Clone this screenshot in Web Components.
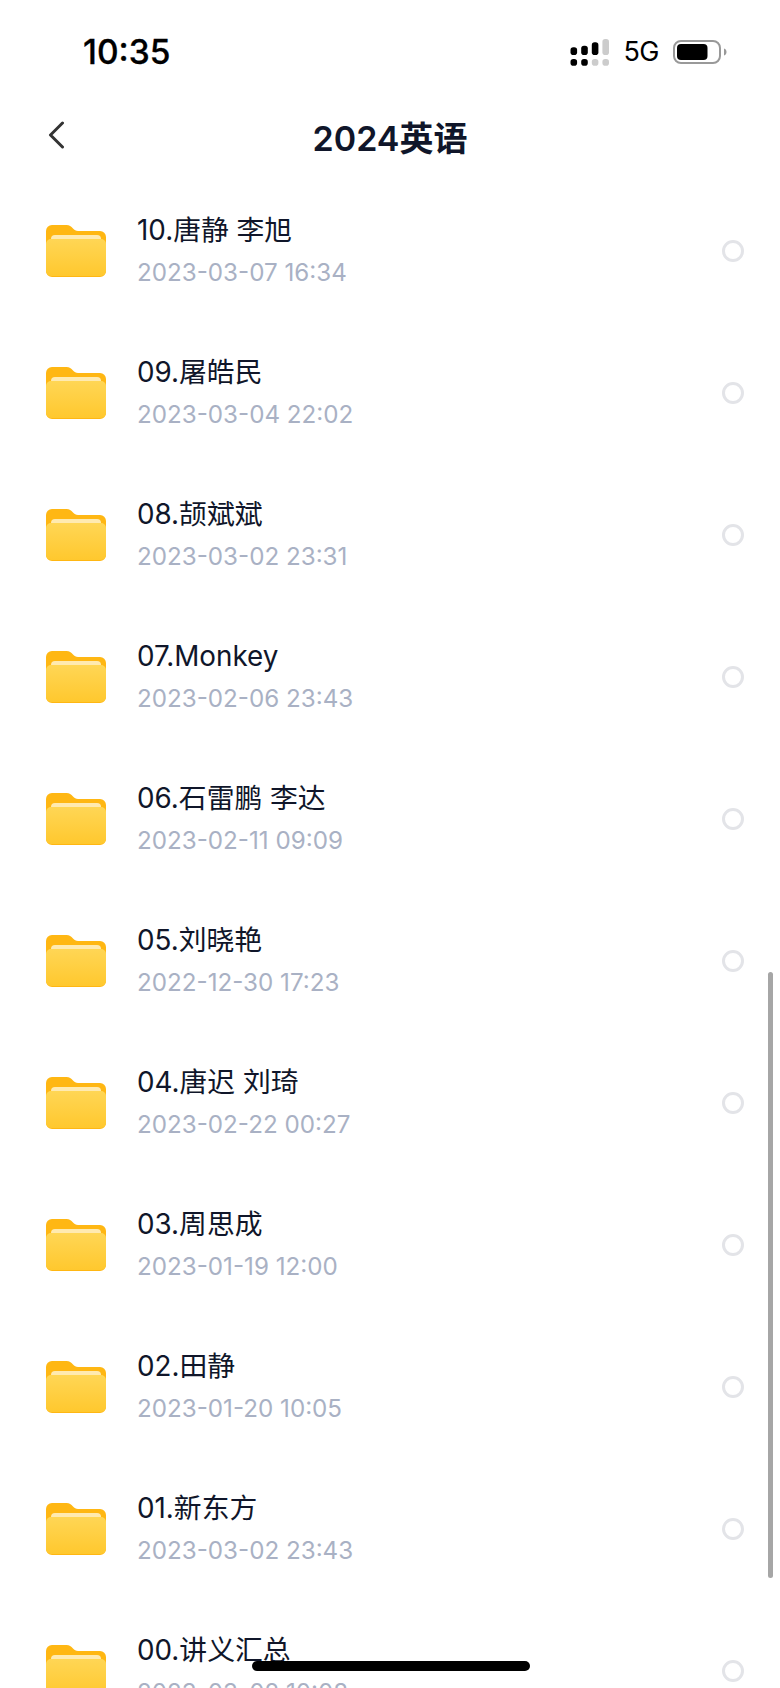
<!DOCTYPE html>
<html lang="zh-CN">
<head>
<meta charset="utf-8">
<title>2024英语</title>
<style>
html, body { margin: 0; padding: 0; background: #fff; }
body { font-family: Inter, "Noto Sans CJK SC", sans-serif; }
</style>
</head>
<body>
<app-screen>
  <status-bar slot="top"></status-bar>
  <nav-bar slot="top">2024英语</nav-bar>
  <file-row date="2023-03-07 16:34">10.唐静 李旭</file-row>
  <file-row date="2023-03-04 22:02">09.屠皓民</file-row>
  <file-row date="2023-03-02 23:31">08.颉斌斌</file-row>
  <file-row date="2023-02-06 23:43">07.Monkey</file-row>
  <file-row date="2023-02-11 09:09">06.石雷鹏 李达</file-row>
  <file-row date="2022-12-30 17:23">05.刘晓艳</file-row>
  <file-row date="2023-02-22 00:27">04.唐迟 刘琦</file-row>
  <file-row date="2023-01-19 12:00">03.周思成</file-row>
  <file-row date="2023-01-20 10:05">02.田静</file-row>
  <file-row date="2023-03-02 23:43">01.新东方</file-row>
  <file-row date="2023-03-02 10:08">00.讲义汇总</file-row>
</app-screen>
<script>
// 状态栏
class StatusBar extends HTMLElement {
  constructor() {
    super();
    this.attachShadow({ mode: 'open' }).innerHTML = `
      <style>
      :host { display: flex; align-items: center; justify-content: space-between; height: 78px; padding: 26px 53px 0 83px; box-sizing: border-box; color: #000; font-family: Inter, "Liberation Sans", sans-serif; }
      .time { font-size: 33.500px; font-weight: 500; -webkit-text-stroke: 0.3px #000; }
      .right { display: flex; align-items: center; }
      .net { font-size: 27px; font-weight: 400; letter-spacing: -0.5px; margin: 0 14px 0 14px; line-height: 28px; }
      svg { display: block; }
      </style>
      <span class="time">10:35</span>
      <div class="right">
        <svg width="39" height="27" viewBox="0 0 39 27">
          <rect x="0.500" y="8.300" width="6.600" height="7.700" rx="2.800" fill="#000"/>
          <rect x="0.500" y="20" width="6.600" height="6.700" rx="2.800" fill="#000"/>
          <rect x="11.200" y="6.700" width="6.600" height="9.300" rx="2.800" fill="#000"/>
          <rect x="11.200" y="20" width="6.600" height="6.700" rx="2.800" fill="#000"/>
          <rect x="21.800" y="3.300" width="6.600" height="12.700" rx="2.800" fill="#000"/>
          <rect x="21.800" y="20" width="6.600" height="6.700" rx="2.800" fill="#ccc"/>
          <rect x="32.400" y="0" width="6.600" height="16" rx="2.800" fill="#ccc"/>
          <rect x="32.400" y="20" width="6.600" height="6.700" rx="2.800" fill="#ccc"/>
        </svg>
        <span class="net">5G</span>
        <svg width="54" height="24" viewBox="0 0 54 24">
          <rect x="1" y="1" width="46" height="22" rx="7" fill="none" stroke="#999" stroke-width="2"/>
          <rect x="4" y="4" width="30.500" height="16" rx="4" fill="#000"/>
          <path d="M51 8.500c1.600.4 2.500 1.800 2.500 3.500s-.9 3.100-2.500 3.500z" fill="#999"/>
        </svg>
      </div>`;
  }
}

// 顶部导航
class NavBar extends HTMLElement {
  constructor() {
    super();
    this.attachShadow({ mode: 'open' }).innerHTML = `
      <style>
      :host { display: grid; grid-template-columns: 96px 1fr 96px; align-items: center; height: 102px; color: #10162a; }
      .back { padding-left: 47px; margin-top: 12px; }
      .title { text-align: center; font-size: 34px; font-weight: 600; font-family: Inter, "Noto Sans CJK SC", sans-serif; margin-top: 14px; }
      svg { display: block; }
      </style>
      <div class="back">
        <svg width="18" height="28" viewBox="0 0 18 28"><path d="M15.500 2 3.500 14l12 12" fill="none" stroke="#333" stroke-width="3" stroke-linecap="round" stroke-linejoin="round"/></svg>
      </div>
      <div class="title"><slot></slot></div>
      <div></div>`;
  }
}

// 文件夹图标
class FolderIcon extends HTMLElement {
  constructor() {
    super();
    this.attachShadow({ mode: 'open' }).innerHTML = `
      <style>
      :host { display: block; width: 60px; height: 53px; }
      svg { display: block; }
      </style>
      <svg width="60" height="53" viewBox="0 0 60 53">
        <defs>
          <linearGradient id="g" x1="0" y1="0" x2="0" y2="1">
            <stop offset="0" stop-color="#ffd655"/>
            <stop offset="1" stop-color="#ffc82e"/>
          </linearGradient>
        </defs>
        <path d="M0 6a6 6 0 0 1 6-6h14.500c3 0 4.500 1.200 6.500 3.500 1.400 1.600 2.800 2.500 5 2.500h22a6 6 0 0 1 6 6v34a6 6 0 0 1-6 6H6a6 6 0 0 1-6-6z" fill="#ffb713"/>
        <path d="M5 14a4 4 0 0 1 4-4h42a4 4 0 0 1 4 4v4H5z" fill="#ffeab0"/>
        <path d="M0 19a5 5 0 0 1 5-5h50a5 5 0 0 1 5 5v27a5 5 0 0 1-5 5H5a5 5 0 0 1-5-5z" fill="url(#g)"/>
      </svg>`;
  }
}

// 单选圈
class SelectRadio extends HTMLElement {
  constructor() {
    super();
    this.attachShadow({ mode: 'open' }).innerHTML = `
      <style>
      :host { display: block; width: 22px; height: 22px; box-sizing: border-box; border: 3px solid #e3e4e8; border-radius: 50%; }
      </style>`;
  }
}

// 文件夹行
class FileRow extends HTMLElement {
  constructor() {
    super();
    this.attachShadow({ mode: 'open' }).innerHTML = `
      <style>
      :host { display: flex; align-items: center; height: 142px; padding: 0 36px 0 46px; box-sizing: border-box; flex: none; }
      folder-icon { flex: none; }
      .text { flex: 1; min-width: 0; margin-left: 31px; display: flex; flex-direction: column; gap: 10px; }
      .name { font-size: 27.800px; line-height: 34px; color: #10162a; font-family: Inter, "Noto Sans CJK SC", sans-serif; }
      .date { font-size: 24.200px; line-height: 32px; color: #a9b1c4; font-family: Inter, "Liberation Sans", sans-serif; }
      </style>
      <folder-icon></folder-icon>
      <div class="text">
        <div class="name"><slot></slot></div>
        <div class="date"></div>
      </div>
      <select-radio></select-radio>`;
  }
  connectedCallback() {
    this.shadowRoot.querySelector('.date').textContent = this.getAttribute('date');
  }
}

// 整屏
class AppScreen extends HTMLElement {
  constructor() {
    super();
    this.attachShadow({ mode: 'open' }).innerHTML = `
      <style>
      :host { display: flex; flex-direction: column; position: relative; width: 780px; height: 1688px; overflow: hidden; background: #fff; }
      .list { flex: 1; min-height: 0; overflow: hidden; display: flex; flex-direction: column; }
      .scroll { position: absolute; left: 768px; top: 972px; width: 5px; height: 606px; border-radius: 3px; background: #a6a6a6; }
      .home { position: absolute; left: 252px; top: 1661px; width: 278px; height: 10px; border-radius: 5px; background: #000; }
      </style>
      <slot name="top"></slot>
      <div class="list"><slot></slot></div>
      <div class="scroll"></div>
      <div class="home"></div>`;
  }
}

customElements.define('status-bar', StatusBar);
customElements.define('nav-bar', NavBar);
customElements.define('folder-icon', FolderIcon);
customElements.define('select-radio', SelectRadio);
customElements.define('file-row', FileRow);
customElements.define('app-screen', AppScreen);
</script>
</body>
</html>
